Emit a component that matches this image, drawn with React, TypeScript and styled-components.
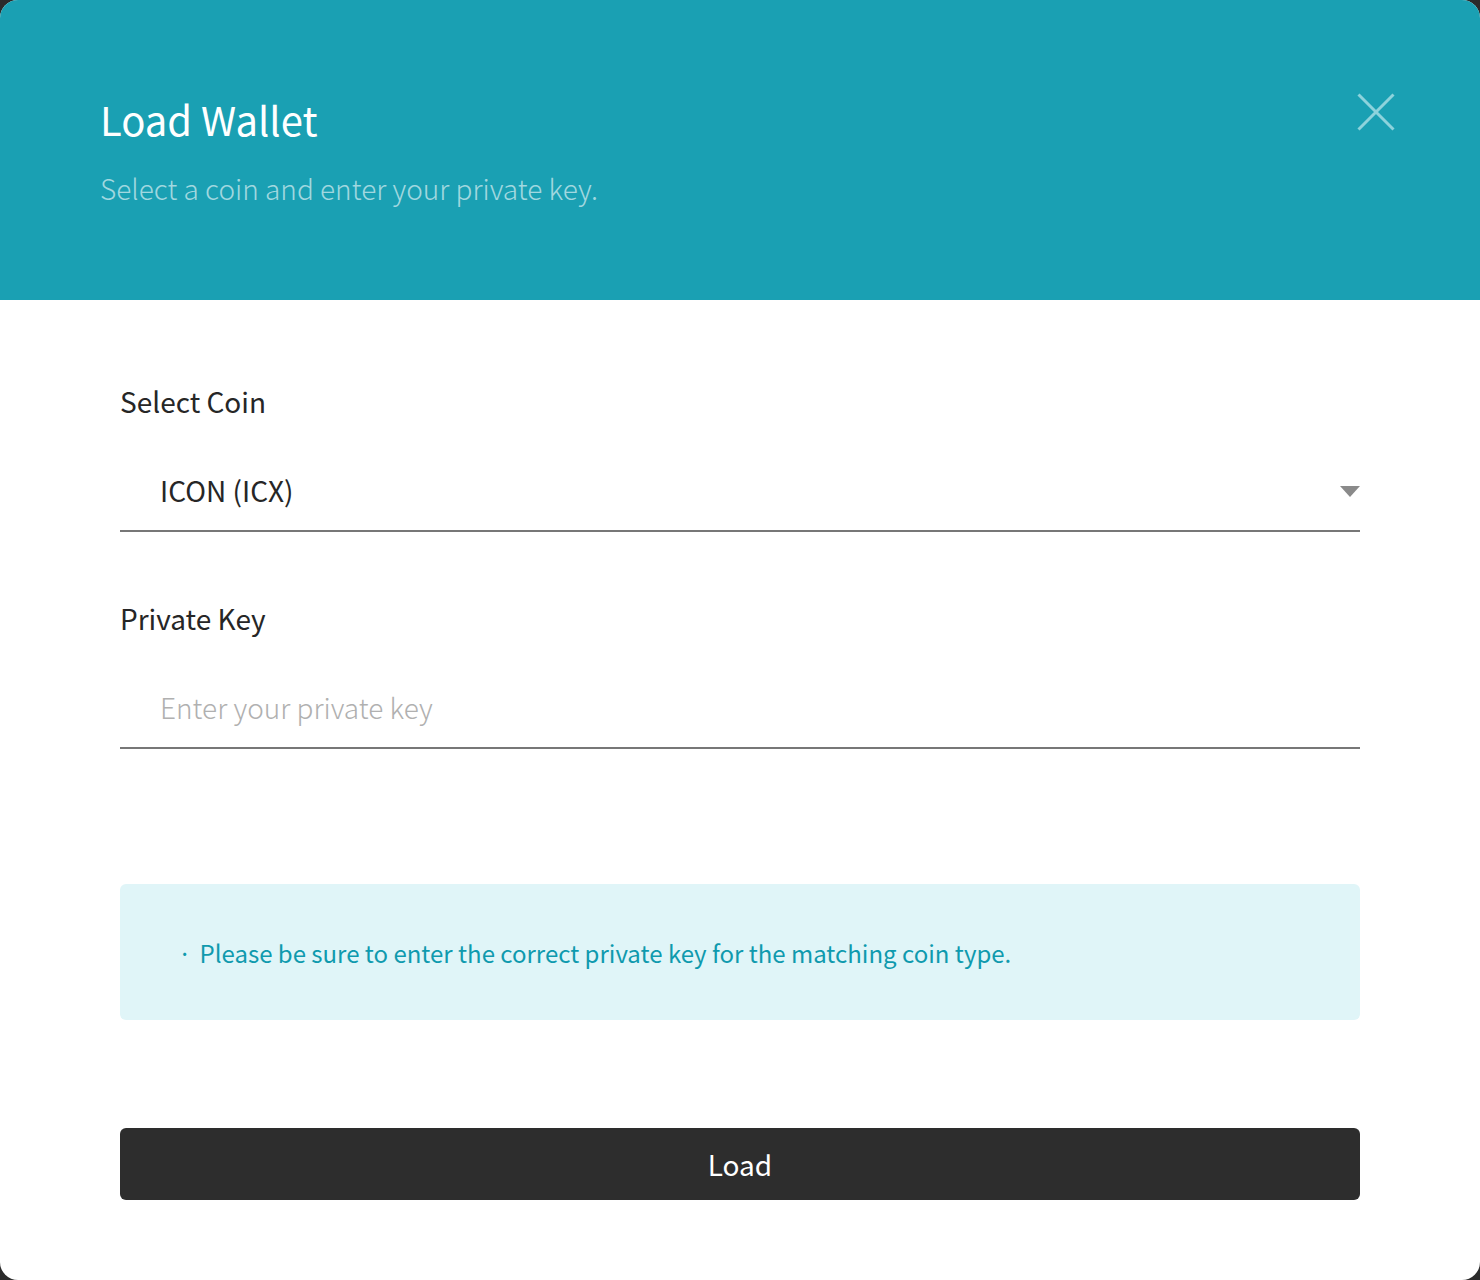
import React from "react";
import styled, { createGlobalStyle } from "styled-components";

const Global = createGlobalStyle`
  html, body { margin: 0; padding: 0; background: #2b2b2b; }
  body { font-family: "Noto Sans CJK KR", "Noto Sans", sans-serif; }
  * { box-sizing: border-box; }
`;

const Modal = styled.div`
  width: 1480px;
  height: 1280px;
  background: #ffffff;
  border-radius: 18px;
  overflow: hidden;
  display: flex;
  flex-direction: column;
`;

const Header = styled.header`
  height: 300px;
  background: #1aa0b3;
  padding: 93px 85px 0 100px;
  display: flex;
  justify-content: space-between;
  align-items: flex-start;
`;

const HeaderText = styled.div`
  display: flex;
  flex-direction: column;
`;

const Title = styled.h1`
  margin: 0;
  font-size: 40px;
  line-height: 52px;
  font-weight: 400;
  color: #ffffff;
`;

const Subtitle = styled.p`
  margin: 25px 0 0;
  font-size: 28px;
  line-height: 36px;
  font-weight: 300;
  color: rgba(255, 255, 255, 0.6);
`;

const CloseButton = styled.button`
  border: none;
  background: none;
  padding: 0;
  width: 38px;
  height: 38px;
  cursor: pointer;
  display: flex;
  align-items: center;
  justify-content: center;
`;

const Body = styled.main`
  padding: 80px 120px 0;
  display: flex;
  flex-direction: column;
`;

const Field = styled.div<{ gap: number }>`
  display: flex;
  flex-direction: column;
  margin-bottom: ${(p) => p.gap}px;
`;

const Label = styled.label`
  font-size: 28px;
  line-height: 42px;
  color: #262626;
  font-weight: 400;
`;

const SelectBox = styled.div`
  margin-top: 28px;
  height: 82px;
  border-bottom: 2px solid #777777;
  display: flex;
  align-items: center;
  justify-content: space-between;
  padding: 0 0 0 40px;
`;

const SelectValue = styled.span`
  font-size: 28px;
  color: #262626;
`;

const Arrow = styled.span`
  width: 0;
  height: 0;
  border-left: 10px solid transparent;
  border-right: 10px solid transparent;
  border-top: 11px solid #8a8a8a;
  margin-top: 2px;
`;

const Input = styled.input`
  margin-top: 28px;
  height: 82px;
  border: none;
  border-bottom: 2px solid #777777;
  outline: none;
  padding: 0 0 0 40px;
  font-family: inherit;
  font-size: 28px;
  font-weight: 300;
  color: #262626;
  &::placeholder {
    color: #b0b0b0;
    font-weight: 300;
  }
`;

const Notice = styled.div`
  height: 136px;
  background: #e0f5f8;
  border-radius: 6px;
  display: flex;
  align-items: center;
  padding: 0 0 0 58px;
  font-size: 24px;
  color: #0f9aae;
`;

const Bullet = styled.span`
  margin-right: 8px;
`;

const LoadButton = styled.button`
  margin-top: 108px;
  height: 72px;
  border: none;
  border-radius: 6px;
  background: #2d2d2d;
  color: #ffffff;
  font-family: inherit;
  font-size: 28px;
  cursor: pointer;
`;

export default function App() {
  return (
    <>
      <Global />
      <Modal>
        <Header>
          <HeaderText>
            <Title>Load Wallet</Title>
            <Subtitle>Select a coin and enter your private key.</Subtitle>
          </HeaderText>
          <CloseButton aria-label="close">
            <svg width="38" height="38" viewBox="0 0 38 38">
              <path d="M1.5 1.5 L36.5 36.5 M36.5 1.5 L1.5 36.5" stroke="#8dd3dc" strokeWidth="3" />
            </svg>
          </CloseButton>
        </Header>
        <Body>
          <Field gap={65}>
            <Label>Select Coin</Label>
            <SelectBox>
              <SelectValue>ICON (ICX)</SelectValue>
              <Arrow />
            </SelectBox>
          </Field>
          <Field gap={135}>
            <Label>Private Key</Label>
            <Input placeholder="Enter your private key" />
          </Field>
          <Notice>
            <Bullet>·</Bullet>Please be sure to enter the correct private key for the matching coin type.
          </Notice>
          <LoadButton>Load</LoadButton>
        </Body>
      </Modal>
    </>
  );
}
